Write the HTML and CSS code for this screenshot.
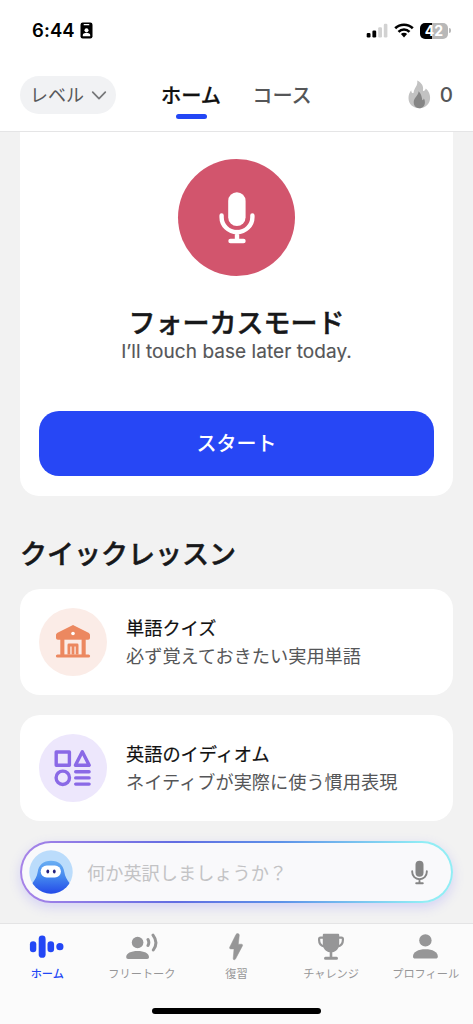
FILE: index.html
```html
<!DOCTYPE html>
<html lang="ja">
<head>
<meta charset="utf-8">
<meta name="viewport" content="width=device-width, initial-scale=1">
<title>ホーム</title>
<link rel="stylesheet" href="styles.css">
</head>
<body>
<div class="app">
  <header class="header">
    <div class="status">
      <div class="status-left">
        <span class="time">6:44</span>
        <svg class="id-card" width="13" height="17" viewBox="0 0 13 17"><rect x=".5" y=".5" width="12" height="16" rx="2.2" fill="#000"/><rect x="3.6" y="2" width="5.8" height="1.3" rx=".6" fill="#fff"/><circle cx="6.5" cy="8.2" r="2" fill="#fff"/><path d="M2.8 14.2v-1.1c0-1.4 1.6-2.3 3.7-2.3s3.7.9 3.7 2.3v1.1z" fill="#fff"/></svg>
      </div>
      <div class="status-right">
        <svg width="22" height="15" viewBox="0 0 22 15"><rect x=".7" y="9.9" width="3.8" height="4.600" rx="1.2"/><rect x="6.400" y="7.600" width="3.800" height="6.900" rx="1.2"/><g fill="#d2d2d2"><rect x="12.200" y="4.200" width="3.800" height="10.300" rx="1.2"/><rect x="17.800" y=".8" width="3.600" height="13.700" rx="1.2"/></g></svg>
        <svg width="20" height="15" viewBox="0 0 20 15"><g fill="none" stroke="#000" stroke-width="2.6"><path d="M1.2 5.3a12.6 12.6 0 0 1 17.6 0"/><path d="M4.5 8.8a7.8 7.8 0 0 1 11 0"/></g><path d="M6.9 11.1a4.4 4.4 0 0 1 6.2 0L10 14.4z"/></svg>
        <div class="battery"><span class="battery-level">42</span><i class="battery-tip"></i></div>
      </div>
    </div>
    <div class="topbar">
      <div class="level"><span>レベル</span><svg width="16" height="11" viewBox="0 0 16 11"><path d="M1.700 2.200 8 8.700l6.300-6.500" fill="none" stroke="#767779" stroke-width="1.700" stroke-linecap="round" stroke-linejoin="round"/></svg></div>
      <nav class="tabs"><span class="tab active">ホーム</span><span class="tab">コース</span></nav>
      <div class="streak">
        <svg width="23" height="29" viewBox="0 0 23 29"><path d="M9.200.6c4.200 2 6.600 5.700 5.800 9.400-.2.900.6 1.400 1.300.8.800-.6 1.300-1.300 1.500-2.300 3 2.700 4.300 5.800 4.300 9.200 0 6.200-4.700 10.500-10.800 10.500S.5 24.200.5 18c0-3 1-5.600 2.700-7.700.1 1.400.5 2.400 1.200 2.800.7.300 1.200-.1 1.300-.9C6 8.500 10.200 5.600 9.200.6z" fill="#c2c2c2"/><path d="M10.500 11.200c.3 4.100-4.700 6-4.800 10.900-.1 3.600 2.200 6.100 5.600 6.100s5.700-2.500 5.600-6c0-1.500-.4-2.600-1.100-3.600-.3 1-.8 1.500-1.500 1.600-.4-3.500-1.300-6.900-3.800-9z" fill="#858585"/></svg>
        <span>0</span>
      </div>
    </div>
  </header>

  <main class="content">
    <section class="focus">
      <div class="mic-circle"><svg width="36" height="52" viewBox="0 0 36 52"><rect x="9.200" y=".3" width="17.400" height="33.700" rx="8.700" fill="#fff"/><path d="M2.600 23.500v1.700c0 8.300 6.900 14.900 15.400 14.900s15.400-6.600 15.400-14.900v-1.700M18 40v9M11.500 49h13" fill="none" stroke="#fff" stroke-width="4.400" stroke-linecap="round"/></svg></div>
      <h1 class="focus-title">フォーカスモード</h1>
      <p class="focus-text">I’ll touch base later today.</p>
      <button class="start">スタート</button>
    </section>

    <h2 class="section-title">クイックレッスン</h2>
    <div class="lessons">
      <article class="lesson">
        <div class="lesson-icon orange"><svg width="36" height="34" viewBox="0 0 36 34"><path d="M18 0 33 7.500c1.300.7 2 1.500 2 2.700v2.600c0 1.200-.7 1.900-1.900 1.900h-2.400v14.700h2.800a1.600 1.600 0 0 1 0 3.200h-31a1.600 1.600 0 0 1 0-3.200h2.800V14.700H2.900c-1.200 0-1.900-.7-1.900-1.900v-2.600c0-1.200.7-2 2-2.700z" fill="#ec8860"/><path d="M9.400 29.400V14.700h17.200v14.700z" fill="#fbece7"/><circle cx="18" cy="8.500" r="1.800" fill="#fff"/><path d="M13.900 29.400V20h8.200v9.400M18 20v9.400" fill="none" stroke="#ec8860" stroke-width="2.800" stroke-linejoin="round"/></svg></div>
        <div class="lesson-text"><h3>単語クイズ</h3><p>必ず覚えておきたい実用単語</p></div>
      </article>
      <article class="lesson">
        <div class="lesson-icon purple"><svg width="38" height="38" viewBox="0 0 38 38" fill="none" stroke="#8a69e6" stroke-width="3.400" stroke-linejoin="round" stroke-linecap="round"><rect x="2.200" y="3" width="13.200" height="13.200"/><path d="M28.300 2.700 35.200 16.200H21.400z"/><circle cx="8.800" cy="28.800" r="6.700"/><path d="M21.700 22.700h13.400M21.700 28.900h13.400M21.700 35.100h13.400"/></svg></div>
        <div class="lesson-text"><h3>英語のイディオム</h3><p>ネイティブが実際に使う慣用表現</p></div>
      </article>
    </div>

    <div class="ask">
      <div class="ask-inner">
        <svg class="avatar" width="44" height="44" viewBox="0 0 44 44"><defs><linearGradient id="robe" x1="0" y1="0" x2="0" y2="1"><stop offset="0" stop-color="#69aff3"/><stop offset=".5" stop-color="#4386ee"/><stop offset="1" stop-color="#2449e8"/></linearGradient><clipPath id="disc"><circle cx="22" cy="22" r="21.700"/></clipPath></defs><g clip-path="url(#disc)"><path fill="#bbdcfb" d="M0 0h44v44H0z"/><path d="M22 10.800c-7.800 0-12.400 4.400-13.300 11.200C8 26.500 6 29.500 3.200 33.500L0 44h44l-3.200-10.500c-2.800-4-4.800-7-5.500-11.500-.9-6.800-5.500-11.200-13.300-11.200z" fill="url(#robe)"/><rect x="11.700" y="15.600" width="20.200" height="12" rx="6" fill="#fff"/><ellipse cx="18.800" cy="21.400" rx="1.400" ry="2" fill="#25207e"/><ellipse cx="25.300" cy="21.400" rx="1.400" ry="2" fill="#25207e"/></g></svg>
        <span class="placeholder">何か英訳しましょうか？</span>
        <svg width="17" height="25" viewBox="0 0 17 25"><rect x="4.500" y=".7" width="8" height="16" rx="4" fill="#858585"/><path d="M1.200 11.200v.8c0 4 3.200 7.200 7.300 7.200s7.300-3.200 7.300-7.200v-.8M8.500 19.200v4M5.200 23.300h6.600" fill="none" stroke="#858585" stroke-width="1.900" stroke-linecap="round"/></svg>
      </div>
    </div>
  </main>

  <footer class="footer">
    <nav class="nav">
      <a class="nav-item current"><svg width="36" height="28" viewBox="0 0 36 28"><rect x=".9" y="8.200" width="6.400" height="11" rx="3.200"/><rect x="9.700" y="2.500" width="6.900" height="22.300" rx="3.400"/><rect x="18.500" y="8.200" width="6.600" height="11" rx="3.300"/><circle cx="30.900" cy="13.700" r="3.600"/></svg><span>ホーム</span></a>
      <a class="nav-item"><svg width="36" height="28" viewBox="0 0 36 28"><circle cx="13.600" cy="9.500" r="5.800"/><path d="M2.200 24.100c0-4 4.900-6.200 11.400-6.200S25 20.100 25 24.100c0 1.300-.7 2-1.900 2h-19c-1.200 0-1.900-.7-1.900-2z"/><path d="M24 6.500c1.100 2 1.100 4.100 0 6M29 2.100c3.600 4.600 3.600 10.300.3 14.900" fill="none" stroke="currentColor" stroke-width="3" stroke-linecap="round"/></svg><span>フリートーク</span></a>
      <a class="nav-item"><svg width="36" height="28" viewBox="0 0 36 28"><path d="M18 1.400 11.700 14.200c-.4.900 0 1.700 1 1.700h3.300l-.8 9.600c-.1 1.500 1.600 1.800 2.300.5l6.900-13.100c.5-1 0-1.700-1-1.700h-3.100l1-9.100c.1-1.500-2.500-2.100-3.300-.7z" stroke="currentColor" stroke-width=".5"/></svg><span>復習</span></a>
      <a class="nav-item"><svg width="36" height="28" viewBox="0 0 36 28"><path d="M9.800 2.200c0-.9.600-1.400 1.400-1.400h13.600c.8 0 1.400.5 1.400 1.400v8.300c0 4.700-2.800 8.300-6.900 8.700v4.500h4.200a1.500 1.500 0 0 1 0 3h-11a1.500 1.500 0 0 1 0-3h4.200v-4.500c-4.100-.4-6.900-4-6.900-8.700z"/><path d="M10 4.700H7.500c-.9 0-1.400.5-1.400 1.400v.8c0 3.600 1.900 5.700 5 6.500M26 4.700h2.500c.9 0 1.400.5 1.400 1.400v.8c0 3.600-1.900 5.700-5 6.500" fill="none" stroke="currentColor" stroke-width="2.200" stroke-linejoin="round"/></svg><span>チャレンジ</span></a>
      <a class="nav-item"><svg width="36" height="28" viewBox="0 0 36 28"><circle cx="17.400" cy="7.400" r="6.200"/><path d="M5 23.500c0-4.600 5.200-7.200 12.400-7.200s12.400 2.600 12.400 7.200c0 1.400-.8 2.100-2.100 2.100H7.100c-1.300 0-2.100-.7-2.100-2.100z"/></svg><span>プロフィール</span></a>
    </nav>
    <div class="home-indicator"></div>
  </footer>
</div>
</body>
</html>
```

FILE: styles.css
```css
* { box-sizing: border-box; }
body, h1, h2, h3, p { margin: 0; }
body {
  font-family: Inter, "Noto Sans CJK JP", sans-serif;
  background: #f2f2f2;
  color: #17181a;
}
svg { display: block; flex: none; }
.app { width: 473px; height: 1024px; display: flex; flex-direction: column; overflow: hidden; }

.header { flex: none; height: 132px; background: #fff; border-bottom: 1px solid #e5e5e6; }
.status { height: 61px; padding: 0 25px 0 32px; display: flex; align-items: center; justify-content: space-between; }
.status-left, .status-right { display: flex; align-items: center; }
.status-left { gap: 5px; }
.status-right { gap: 6px; }
.time { font-size: 18.5px; font-weight: 600; color: #000; line-height: 20px; letter-spacing: .1px; padding-bottom: 1px; }
.battery { position: relative; width: 28px; height: 16px; border-radius: 5px; background: linear-gradient(90deg, #000 42%, #b8b8b8 42%); display: flex; align-items: center; justify-content: center; }
.battery-level { color: #fff; font-size: 14px; font-weight: 700; line-height: 16px; }
.battery-tip { position: absolute; right: -3px; top: 5.5px; width: 2px; height: 5px; border-radius: 0 2px 2px 0; background: #b8b8b8; }

.topbar { height: 67px; padding: 0 20px; display: flex; align-items: center; }
.level { width: 96px; height: 38px; border-radius: 19px; background: #f1f2f4; padding: 1px 9px 0 10px; display: flex; align-items: center; justify-content: space-between; font-size: 18px; color: #58595b; line-height: 26px; }
.level span { padding-top: 2px; }
.tabs { display: flex; gap: 31px; margin-left: 45px; }
.tab { width: 60px; height: 48px; padding-top: 3px; font-size: 20.2px; font-weight: 500; color: #555658; line-height: 44px; display: flex; flex-direction: column; align-items: center; white-space: nowrap; }
.tab.active { color: #111; -webkit-text-stroke: .25px #111; }
.tab.active::after { content: ""; width: 31px; height: 5px; border-radius: 3px; background: #2347f5; margin-top: -4px; flex: none; }
.streak { margin-left: auto; display: flex; align-items: center; gap: 9px; font-size: 20.5px; font-weight: 500; color: #555658; line-height: 28px; }

.content { flex: 1; min-height: 0; padding: 0 20px; }
.focus { height: 364px; background: #fff; border-radius: 0 0 19px 19px; padding: 27px 19px 0; display: flex; flex-direction: column; align-items: center; }
.mic-circle { width: 117px; height: 117px; border-radius: 50%; background: #d2556d; display: flex; align-items: center; justify-content: center; }
.focus-title { margin-top: 29px; font-size: 27px; font-weight: 500; line-height: 38px; white-space: nowrap; -webkit-text-stroke: .5px currentColor; }
.focus-text { margin-top: -2px; font-size: 19px; line-height: 22px; color: #555658; white-space: nowrap; -webkit-text-stroke: .15px currentColor; letter-spacing: .05px; }
.start { margin-top: 48px; width: 395px; height: 65px; flex: none; border: 0; border-radius: 20px; background: #2747f5; color: #fff; font-family: inherit; font-size: 20px; font-weight: 500; line-height: 28px; }

.section-title { margin-top: 39.5px; font-size: 27px; font-weight: 500; line-height: 38px; -webkit-text-stroke: .5px currentColor; }
.lessons { margin-top: 15px; display: grid; gap: 19.5px; }
.lesson { height: 106.5px; border-radius: 20px; background: #fff; padding: 0 19px; display: flex; align-items: center; gap: 19px; }
.lesson-icon { width: 68px; height: 68px; border-radius: 50%; display: flex; align-items: center; justify-content: center; }
.orange { background: #fbece7; }
.purple { background: #ede7fc; }
.lesson-text { padding-top: 2px; }
.lesson-text h3 { font-size: 18.2px; font-weight: 400; line-height: 28px; color: #111; -webkit-text-stroke: .2px #111; }
.lesson-text p { font-size: 18.2px; line-height: 29px; color: #555658; }

.ask { margin-top: 20px; height: 62px; border-radius: 31px; padding: 2px; background: linear-gradient(90deg, #a783e8, #626de2 36%, #5d91e8 60%, #91edf5 93%); box-shadow: 0 4px 12px rgba(115, 110, 255, .24); }
.ask-inner { height: 58px; border-radius: 29px; background: #f9f9fb; padding: 0 23px 0 7px; display: flex; align-items: center; }
.placeholder { margin-left: 14px; padding-top: 1px; flex: 1; font-size: 18.2px; line-height: 28px; color: #c3c3c5; }

.footer { flex: none; height: 101px; background: #fbfbfb; border-top: 1px solid #e4e4e5; display: flex; flex-direction: column; align-items: center; }
.nav { width: 473px; height: 84px; display: grid; grid-template-columns: repeat(5, 1fr); padding-top: 9px; }
.nav-item { display: flex; flex-direction: column; align-items: center; gap: 5px; color: #969697; fill: currentColor; font-size: 11.2px; line-height: 16px; white-space: nowrap; }
.nav-item.current { color: #2347f5; font-weight: 500; }
.home-indicator { width: 169px; height: 6px; border-radius: 3px; background: #000; }
```
